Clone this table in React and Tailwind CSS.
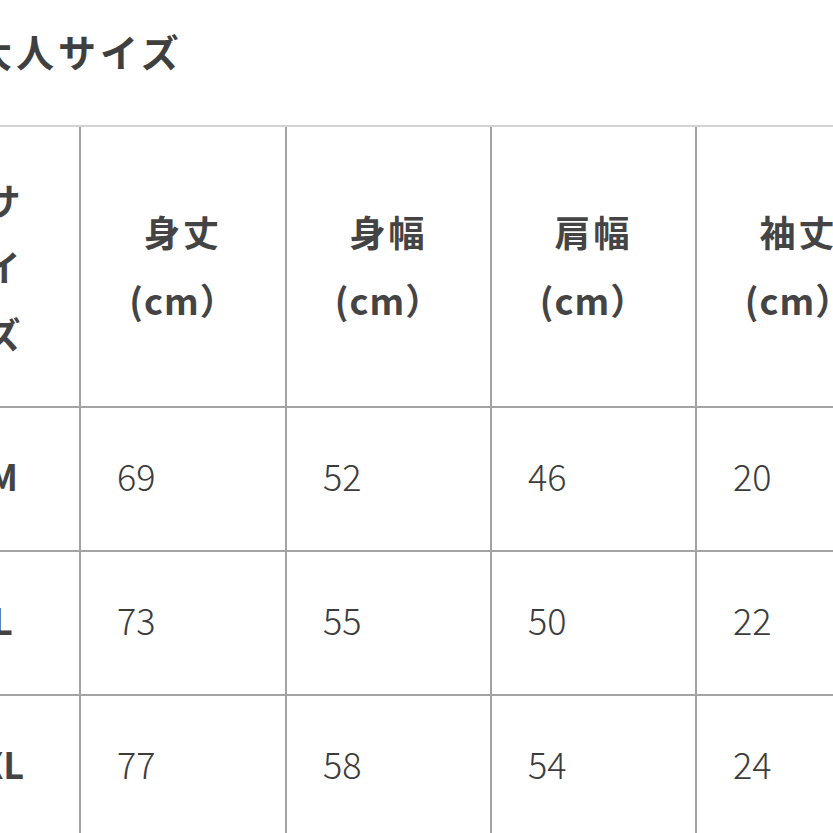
import React from "react";

const font = { fontFamily: '"Noto Sans CJK JP", "Noto Sans", sans-serif' };

const heads = ["身丈", "身幅", "肩幅", "袖丈"];
const rows = [
  ["M", "69", "52", "46", "20"],
  ["L", "73", "55", "50", "22"],
  ["XL", "77", "58", "54", "24"],
];

export default function App() {
  return (
    <div
      className="w-[833px] h-[833px] overflow-hidden bg-white text-[#444444]"
      style={font}
    >
      <div className="ml-[-26px] pt-[23px] h-[125px] text-[38px] leading-[56px] font-bold tracking-[4px] whitespace-nowrap text-[#3f3f3f]">
        大人サイズ
      </div>
      <div className="ml-[-74px] w-[1100px] grid grid-cols-[153px_206px_205px_205px_205px_205px] grid-rows-[279px_144px_144px_144px] border-t-2 border-[#d2d2d2]">
        <div className="flex items-center justify-center font-bold text-[36px] leading-[67px] text-center">
          <div className="w-[36px]">サイズ</div>
        </div>
        {heads.map((h) => (
          <div
            key={h}
            className="border-l-2 border-[#a3a3a3] flex flex-col items-center justify-center font-bold text-[36px] leading-[68px] tracking-[3px] whitespace-nowrap"
          >
            <div>{h}</div>
            <div className="tracking-[1px] pb-[4px]">(cm）</div>
          </div>
        ))}
        <div className="border-l-2 border-[#a3a3a3]"></div>
        {rows.map((r) => (
          <React.Fragment key={r[0]}>
            {r.map((v, i) =>
              i === 0 ? (
                <div
                  key={i}
                  className="border-t-2 border-[#a3a3a3] flex items-center justify-center font-bold text-[36px] pb-[8px]"
                >
                  {v}
                </div>
              ) : (
                <div
                  key={i}
                  className="border-t-2 border-l-2 border-[#a3a3a3] flex items-center pl-[36px] pb-[8px] text-[36px] font-light text-[#3c3c3c]"
                >
                  {v}
                </div>
              )
            )}
            <div className="border-t-2 border-l-2 border-[#a3a3a3]"></div>
          </React.Fragment>
        ))}
      </div>
    </div>
  );
}
